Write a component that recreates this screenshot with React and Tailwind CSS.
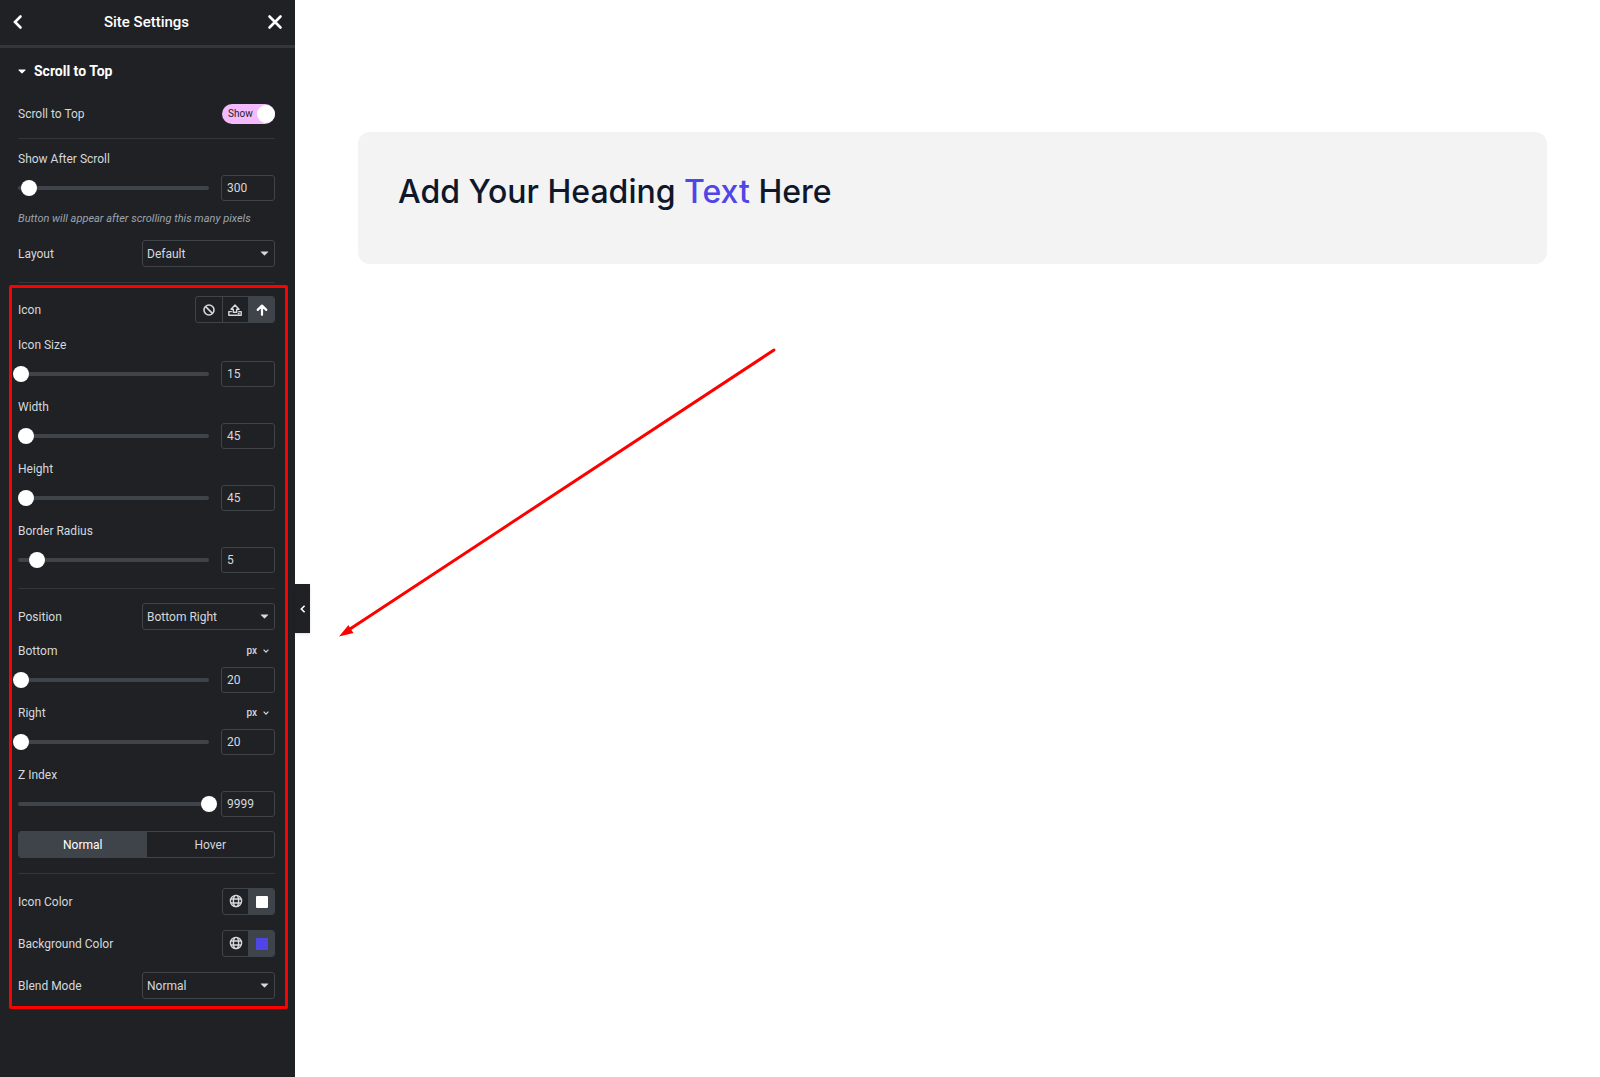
import { useState } from 'react';

const controlBorder = 'border border-[#3f444b] rounded-[3px]';

const CaretDown = ({ className }) => (
  <svg viewBox="0 0 10 6" className={className} fill="currentColor" aria-hidden="true">
    <path d="M1 0.5h8c.5 0 .7.5.4.8L5.5 5.2c-.3.3-.7.3-1 0L.6 1.3C.3 1 .5.5 1 .5z" />
  </svg>
);

const Divider = () => <hr className="border-0 h-px bg-[#33373c]" />;

const SliderField = ({ id, label, min = 0, max, initial, unit }) => {
  const [value, setValue] = useState(initial);

  return (
    <div>
      <div className="flex items-center justify-between h-4">
        <label htmlFor={id}>{label}</label>
        {unit && (
          <button type="button" className="flex items-center gap-1.5 pr-1.5 text-[10px] leading-4 font-medium">
            {unit}
            <svg viewBox="0 0 6 4" className="w-1.5 h-1" fill="none" stroke="currentColor" strokeWidth="1.2" aria-hidden="true">
              <path d="M.6.7 3 3.1 5.4.7" />
            </svg>
          </button>
        )}
      </div>
      <div className="flex items-center gap-3 mt-2">
        <div className="flex items-center flex-1 h-1 rounded-full bg-[#3f444b]">
          <input
            type="range"
            aria-label={`${label} slider`}
            min={min}
            max={max}
            value={value}
            onChange={(e) => setValue(e.target.value)}
            className="appearance-none bg-transparent h-4 -mx-2 w-[calc(100%+16px)] shrink-0 [&::-webkit-slider-thumb]:appearance-none [&::-webkit-slider-thumb]:w-4 [&::-webkit-slider-thumb]:h-4 [&::-webkit-slider-thumb]:rounded-full [&::-webkit-slider-thumb]:bg-white"
          />
        </div>
        <input
          id={id}
          type="text"
          value={value}
          onChange={(e) => setValue(e.target.value)}
          className={`w-[54px] h-[26px] px-[5px] bg-transparent ${controlBorder}`}
        />
      </div>
    </div>
  );
};

const SelectField = ({ id, label, options }) => (
  <div className="flex items-center justify-between">
    <label htmlFor={id}>{label}</label>
    <div className="relative">
      <select id={id} className={`block appearance-none w-[133px] h-[27px] pl-1 bg-[#1f2124] ${controlBorder}`}>
        {options.map((option) => (
          <option key={option}>{option}</option>
        ))}
      </select>
      <CaretDown className="absolute right-1.5 top-[11px] w-[9px] h-[5px] pointer-events-none" />
    </div>
  </div>
);

const GlobeIcon = () => (
  <svg viewBox="0 0 14 14" className="w-3.5 h-3.5" fill="none" stroke="currentColor" strokeWidth="1.4" aria-hidden="true">
    <circle cx="7" cy="7" r="5.6" />
    <ellipse cx="7" cy="7" rx="2.6" ry="5.6" />
    <path d="M1.8 5h10.4M1.8 9h10.4" />
  </svg>
);

const ColorField = ({ label, swatch }) => (
  <div className="flex items-center justify-between">
    <span>{label}</span>
    <div className={`flex w-[53px] h-[27px] overflow-hidden ${controlBorder}`}>
      <button type="button" aria-label={`${label} global`} className="flex flex-1 items-center justify-center pb-px">
        <GlobeIcon />
      </button>
      <button type="button" aria-label={label} className="flex w-[27px] -mr-px items-center justify-center bg-[#3f444b]">
        <span className={`w-3 h-3 rounded-[1px] ${swatch}`} />
      </button>
    </div>
  </div>
);

const IconField = () => (
  <div className="flex items-center justify-between">
    <span>Icon</span>
    <div className={`flex w-20 h-[27px] overflow-hidden ${controlBorder}`}>
      <button type="button" aria-label="None" className="flex flex-1 items-center justify-center">
        <svg viewBox="0 0 12 12" className="w-3 h-3" fill="none" stroke="currentColor" strokeWidth="1.6" aria-hidden="true">
          <circle cx="6" cy="6" r="5" />
          <path d="M2.6 2.6l6.8 6.8" />
        </svg>
      </button>
      <button type="button" aria-label="Upload SVG" className="flex flex-1 items-center justify-center border-l border-[#3f444b]">
        <svg viewBox="0 0 14 12" className="w-3.5 h-3" fill="none" stroke="currentColor" strokeWidth="1.4" strokeLinejoin="round" aria-hidden="true">
          <path d="M7 .9 11 5.2H8.700v3H5.300v-3H3z" />
          <path d="M3.800 7.600H.8v3.600h12.400V7.600h-3M9.800 9.500h1.800" />
        </svg>
      </button>
      <button type="button" aria-label="Icon Library" className="flex w-[27px] -mr-px items-center justify-center bg-[#3f444b] text-white">
        <svg viewBox="0 0 12 12" className="w-3 h-3" fill="none" stroke="currentColor" strokeWidth="2.2" strokeLinecap="round" strokeLinejoin="round" aria-hidden="true">
          <path d="M6 10.800V1.600M1.700 5.900 6 1.600l4.300 4.300" />
        </svg>
      </button>
    </div>
  </div>
);

const StateTabs = () => {
  const [active, setActive] = useState('Normal');

  return (
    <div className={`flex h-[27px] overflow-hidden ${controlBorder}`}>
      {['Normal', 'Hover'].map((tab) => (
        <button
          key={tab}
          type="button"
          onClick={() => setActive(tab)}
          className={active === tab ? 'flex-1 bg-[#3f444b] text-white' : 'flex-1'}
        >
          {tab}
        </button>
      ))}
    </div>
  );
};

const Sidebar = () => (
  <aside className="relative w-[295px] shrink-0 bg-[#1f2124] text-[#d5d8dc] text-xs">
    <header className="flex items-center justify-between h-12 px-3 pb-0.5 border-b-3 border-[#33363b] text-white">
      <button type="button" aria-label="Back" className="w-3.5 h-4">
        <svg viewBox="0 0 12 16" className="w-3 h-4" fill="none" stroke="currentColor" strokeWidth="2.6" strokeLinecap="round" aria-hidden="true">
          <path d="M8.500 2.500 3 8l5.500 5.500" />
        </svg>
      </button>
      <h1 className="text-[15px] leading-5 font-medium">Site Settings</h1>
      <button type="button" aria-label="Close" className="w-4 h-4">
        <svg viewBox="0 0 16 16" className="w-4 h-4" fill="none" stroke="currentColor" strokeWidth="2.6" strokeLinecap="round" aria-hidden="true">
          <path d="M2.500 2.500l11 11M13.500 2.500l-11 11" />
        </svg>
      </button>
    </header>

    <div className="pl-[18px] pr-5">
      <button type="button" className="flex items-center gap-2 h-[46px] text-sm font-bold text-white">
        <CaretDown className="w-2 h-[5px]" />
        Scroll to Top
      </button>

      <div className="flex items-center justify-between h-5 mt-2.5 mb-3.5">
        <label htmlFor="scroll-to-top">Scroll to Top</label>
        <label className="relative flex items-center w-[53px] h-5 pl-1.5 rounded-full bg-[#f3bafd] text-[10px] text-[#1f2124]">
          <input id="scroll-to-top" type="checkbox" defaultChecked className="peer sr-only" />
          Show
          <span className="absolute right-0 top-px size-[18px] rounded-full bg-white" />
        </label>
      </div>
      <Divider />
      <div className="mt-3">
        <SliderField id="show-after" label="Show After Scroll" max={5300} initial={300} />
      </div>
      <p className="mt-2.5 mb-[13px] text-[11px] leading-4 italic text-[#9da5ae]">Button will appear after scrolling this many pixels</p>
      <SelectField id="layout" label="Layout" options={['Default', 'Custom']} />
      <div className="mt-[15px]">
        <Divider />
      </div>
    </div>

    <section className="mt-0.5 ml-[9px] mr-[7px] pt-2 pb-[7px] pl-1.5 pr-2.5 border-3 border-[#ff0000] rounded-xs">
      <IconField />
      <div className="flex flex-col gap-3 mt-3.5 mb-[15px]">
        <SliderField id="icon-size" label="Icon Size" max={1000} initial={15} />
        <SliderField id="width" label="Width" max={1060} initial={45} />
        <SliderField id="height" label="Height" max={1060} initial={45} />
        <SliderField id="radius" label="Border Radius" max={50} initial={5} />
      </div>
      <Divider />
      <div className="mt-3.5 mb-[13px]">
        <SelectField id="position" label="Position" options={['Bottom Right', 'Bottom Left']} />
      </div>
      <div className="flex flex-col gap-3 mb-3.5">
        <SliderField id="bottom" label="Bottom" max={1150} initial={20} unit="px" />
        <SliderField id="right" label="Right" max={1150} initial={20} unit="px" />
        <SliderField id="z-index" label="Z Index" max={9999} initial={9999} />
      </div>
      <StateTabs />
      <div className="mt-[15px] mb-3.5">
        <Divider />
      </div>
      <div className="flex flex-col gap-[15px]">
        <ColorField label="Icon Color" swatch="bg-white" />
        <ColorField label="Background Color" swatch="bg-[#4f46e5]" />
        <SelectField id="blend" label="Blend Mode" options={['Normal', 'Multiply', 'Screen', 'Overlay']} />
      </div>
    </section>

    <button
      type="button"
      aria-label="Hide panel"
      className="absolute left-full top-[584px] flex items-center justify-center w-[15px] h-[49px] bg-[#1f2124] text-white shadow-sm"
    >
      <svg viewBox="0 0 6 8" className="w-1.5 h-2" fill="none" stroke="currentColor" strokeWidth="1.6" aria-hidden="true">
        <path d="M4.600.7 1.300 4l3.300 3.300" />
      </svg>
    </button>
  </aside>
);

const App = () => {
  return (
    <div className="flex min-h-screen bg-white font-[Roboto,sans-serif]">
      <Sidebar />
      <main className="relative flex-1 pt-[132px] pl-[63px] pr-[53px]">
        <div className="pt-[38px] pb-[50px] px-10 rounded-xl bg-[#f3f3f3]">
          <h2 className="font-[Inter,sans-serif] font-medium text-[32px] leading-[44px] text-[#0f172a]">
            Add Your Heading <span className="text-[#4f46e5]">Text</span> Here
          </h2>
        </div>
        <svg viewBox="0 0 440 292" className="absolute left-[42px] top-[347px] w-[440px] h-[292px]" aria-hidden="true">
          <path d="M437 3 13 282" stroke="#ff0000" strokeWidth="3" strokeLinecap="round" />
          <path d="M2 289.500 11.500 278 13 281 16.500 286z" fill="#ff0000" />
        </svg>
      </main>
    </div>
  );
};

export default App;
